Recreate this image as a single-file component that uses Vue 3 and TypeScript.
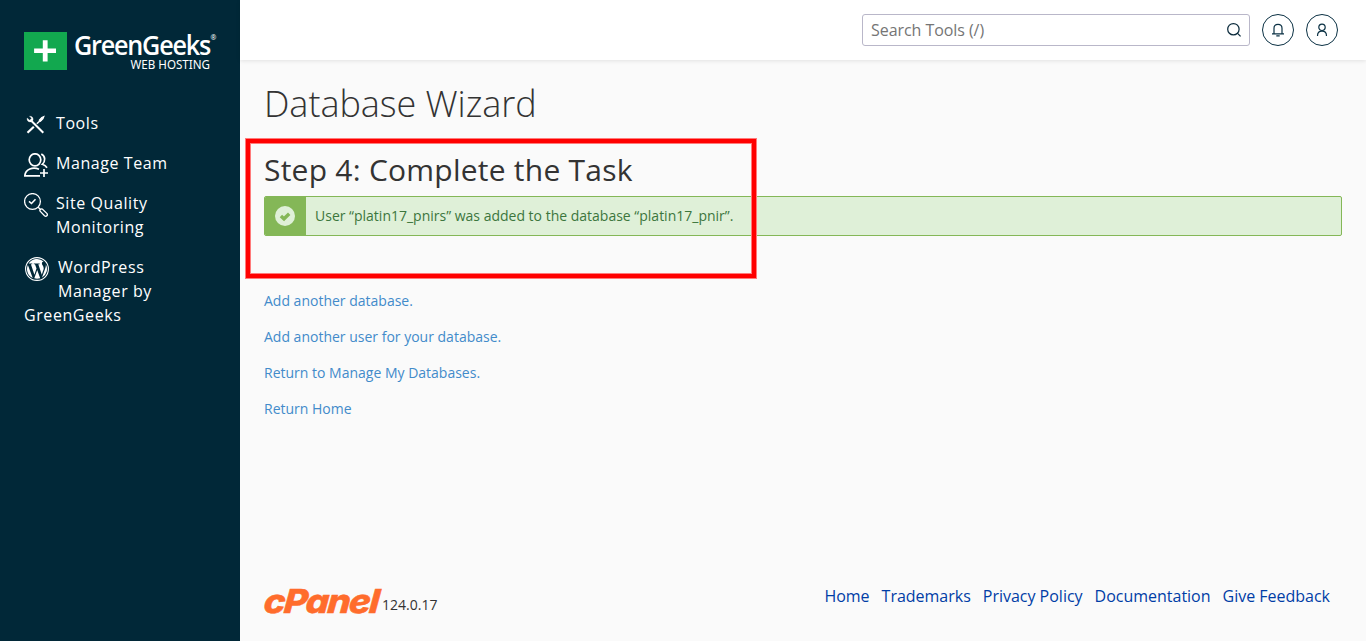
<script setup lang="ts">
interface NavLink {
  label: string
  href: string
}

const nextSteps: NavLink[] = [
  { label: 'Add another database.', href: '#add-database' },
  { label: 'Add another user for your database.', href: '#add-user' },
  { label: 'Return to Manage My Databases.', href: '#databases' },
  { label: 'Return Home', href: '#home' },
]

const footerLinks: NavLink[] = [
  { label: 'Home', href: '#home' },
  { label: 'Trademarks', href: '#trademarks' },
  { label: 'Privacy Policy', href: '#privacy' },
  { label: 'Documentation', href: '#docs' },
  { label: 'Give Feedback', href: '#feedback' },
]
</script>

<template>
  <div class="shell">
    <aside class="sidebar">
      <a class="brand" href="#home">
        <svg width="200" height="56" viewBox="0 -10 200 56">
          <rect x="0" y="1" width="43" height="38" fill="#12a84f" />
          <path d="M18.800 9.200h4.800v8.300h8.400v4.500h-8.400v8.400h-4.800v-8.400h-8.700v-4.500h8.700z" fill="#fff" />
          <text class="brand-name" x="50" y="24" textLength="136" lengthAdjust="spacingAndGlyphs">GreenGeeks</text>
          <text class="brand-mark" x="186.500" y="8.500">®</text>
          <text class="brand-sub" x="106.500" y="38" textLength="79.500" lengthAdjust="spacingAndGlyphs">WEB HOSTING</text>
        </svg>
      </a>

      <nav class="menu">
        <a class="item" href="#tools">
          <svg class="icon" viewBox="0 0 24 24" fill="none" stroke="#fff">
            <path d="M7.500 8 19.300 19.800" stroke-width="2" />
            <path d="M3.500 19.800 9.800 13.800" stroke-width="2.200" />
            <path d="M12.800 10.800 17.500 6.500" stroke-width="1.500" />
            <path d="M15.300 7.200 17.800 4.400 19.800 3.600 19 5.600 16.500 8.200z" fill="#fff" stroke-width="1.200" />
            <path d="M5.500 3.200 7.600 5.300 5.700 7.200 3.100 5C2.700 7.700 4.500 9.400 7.200 8.900L9.100 7.200C9.500 4.700 8.100 3 5.500 3.200z" fill="#fff" stroke-width=".3" />
          </svg>
          <span class="label">Tools</span>
        </a>
        <a class="item" href="#team">
          <svg class="icon" viewBox="0 0 24 24" fill="none" stroke="#fff" stroke-width="1.700">
            <ellipse cx="11" cy="6.800" rx="5.800" ry="6" />
            <path d="M17.300 1c4.300 2.300 4.300 7.300 1 10.300 2.200.6 3.700 1.700 4.700 3.400" />
            <path d="M15 16.200C9 13.500 1.200 16 .8 22.900H16" />
            <path d="M20 16v8M16 20h8" />
          </svg>
          <span class="label">Manage Team</span>
        </a>
        <a class="item" href="#quality">
          <svg class="icon" viewBox="0 0 24 24" fill="none" stroke="#fff" stroke-width="1.300">
            <circle cx="8.500" cy="8.500" r="7.900" />
            <path d="M5 8.300 7.500 10.500 11.500 6.300" stroke-width="1.600" />
            <path d="M14.200 14.200 17 17" />
            <path d="M16.100 18.200c-.8-1.300.7-2.900 2.200-2.100l4.500 4.300c1.500 1.700-.5 3.800-2.300 2.400z" />
          </svg>
          <span class="label">Site Quality Monitoring</span>
        </a>
        <a class="item item-plugin" href="#wordpress">
          <svg class="plugin-icon" viewBox="0 0 24 24">
            <circle cx="12" cy="12" r="11.400" fill="none" stroke="#fff" stroke-width="1.100" />
            <path fill="#fff" d="M2 12c0 4 2.300 7.400 5.700 9L2.900 8C2.300 9.200 2 10.600 2 12zM18.700 11.500c0-1.200-.4-2.100-.8-2.800-.5-.8-1-1.500-1-2.300 0-.9.700-1.800 1.700-1.800h.1A10 10 0 0 0 3.700 6.500h.6c1 0 2.700-.1 2.700-.1.500 0 .6.700.1.800l-1.200.1 3.500 10.500 2.100-6.400-1.500-4.100-1-.1c-.5 0-.5-.8.100-.8 0 0 1.600.1 2.600.1s2.700-.1 2.700-.1c.5 0 .6.700.1.800l-1.200.1 3.500 10.400 1-3.200c.6-1.500.9-2.500.9-3zM12.200 12.900l-2.900 8.400c2 .6 4.100.5 5.900-.1zM20.800 7.300c.2 1.600-.1 3-.7 4.500l-3.100 8.800A10 10 0 0 0 20.800 7.300z" />
          </svg>
          WordPress Manager by GreenGeeks
        </a>
      </nav>
    </aside>

    <div class="page">
      <header class="topbar">
        <div class="search">
          <input type="text" placeholder="Search Tools (/)" aria-label="Search Tools" />
          <svg width="16" height="16" viewBox="0 0 16 16" fill="none" stroke="#0b2b3c" stroke-width="1.250">
            <circle cx="7.400" cy="7.200" r="5.700" />
            <path d="M11.300 11.100 14.600 14.400" />
          </svg>
        </div>
        <button class="round" aria-label="Notifications">
          <svg width="14" height="14" viewBox="0 0 14 14" fill="none" stroke="#0b3144" stroke-width="1.200">
            <path d="M3 10.700V5.200C3 2.700 4.600 1.300 7 1.300s4 1.400 4 3.900v5.500M1 10.800h12M5.300 12.900h3.400" />
          </svg>
        </button>
        <button class="round" aria-label="Account">
          <svg width="14" height="14" viewBox="0 0 14 14" fill="none" stroke="#0b3144" stroke-width="1.200">
            <circle cx="7" cy="4.300" r="3.200" />
            <path d="M2.500 13c0-2.600 1.600-4.800 4.500-4.800s4.500 2.200 4.500 4.800" />
          </svg>
        </button>
      </header>

      <main class="content">
        <h1>Database Wizard</h1>
        <section class="step">
          <h2>Step 4: Complete the Task</h2>
          <div class="alert">
            <span class="alert-icon">
              <svg width="20" height="20" viewBox="0 0 20 20">
                <circle cx="10" cy="10" r="10" fill="#dff0d8" />
                <path d="M5.900 9.900 9 12.800 14.200 7.700" fill="none" stroke="#84b757" stroke-width="3.400" />
              </svg>
            </span>
            <span class="alert-text">User “platin17_pnirs” was added to the database “platin17_pnir”.</span>
          </div>
          <div class="highlight"></div>
        </section>
        <ul class="next">
          <li v-for="link in nextSteps" :key="link.label">
            <a :href="link.href">{{ link.label }}</a>
          </li>
        </ul>
      </main>

      <footer class="footer">
        <div class="product">
          <svg width="118" height="46" viewBox="0 -8 118 46">
            <text class="product-name" x="0" y="24" textLength="114" lengthAdjust="spacingAndGlyphs" transform="translate(1.200 0) skewX(-5)">cPanel</text>
          </svg>
          <span class="version">124.0.17</span>
        </div>
        <nav class="footer-links">
          <a v-for="link in footerLinks" :key="link.label" :href="link.href">{{ link.label }}</a>
        </nav>
      </footer>
    </div>
  </div>
</template>

<style>
body {
  margin: 0;
  background: #fafafa;
}
</style>

<style scoped>
.shell {
  display: flex;
  height: 641px;
  overflow: hidden;
  font-family: "Open Sans", "Noto Sans", sans-serif;
  color: #333;
}
a {
  text-decoration: none;
}
.sidebar {
  box-sizing: border-box;
  flex: 0 0 240px;
  padding-top: 21px;
  background: #012838;
}
.brand {
  display: block;
  padding-left: 24px;
}
.brand svg {
  display: block;
  overflow: visible;
}
.brand text {
  fill: #fff;
}
.brand-name {
  font: 600 27px "Open Sans", sans-serif;
  letter-spacing: -1.300px;
}
.brand-mark {
  font: 7px "Noto Sans", sans-serif;
}
.brand-sub {
  font: 12.500px "Noto Sans", sans-serif;
}
.menu {
  margin-top: 26px;
}
.item {
  display: flex;
  gap: 8px;
  padding: 8px 24px;
  color: #fff;
  font-size: 16px;
  line-height: 24px;
  letter-spacing: 0.58px;
}
.icon {
  flex: none;
  width: 24px;
  height: 24px;
  margin: 2px 0 -2px;
}
.label {
  width: 130px;
}
.item-plugin {
  display: block;
  width: 140px;
}
.plugin-icon {
  float: left;
  width: 24px;
  height: 24px;
  margin: 2px 9px 4px 1px;
}
.page {
  flex: 1;
  display: flex;
  flex-direction: column;
  background: #fafafa;
}
.topbar {
  box-sizing: border-box;
  flex: 0 0 60px;
  display: flex;
  justify-content: flex-end;
  align-items: center;
  gap: 12px;
  padding-right: 28px;
  background: #fff;
  box-shadow: 0 1px 4px rgba(0, 0, 0, 0.1);
}
.search {
  box-sizing: border-box;
  display: flex;
  align-items: center;
  width: 388px;
  height: 32px;
  padding: 0 7px 0 8px;
  border: 1px solid #b9b7c9;
  border-radius: 3px;
  background: #fff;
}
.search input {
  flex: 1;
  min-width: 0;
  padding: 0;
  border: 0;
  outline: 0;
  background: none;
  font: 16px "Open Sans", sans-serif;
  letter-spacing: -0.06px;
}
.search input::placeholder {
  color: #757575;
}
.round {
  box-sizing: border-box;
  display: flex;
  align-items: center;
  justify-content: center;
  width: 32px;
  height: 32px;
  padding: 0;
  border: 1px solid #0b3144;
  border-radius: 50%;
  background: #fff;
}
.content {
  flex: 1;
  padding: 24px 24px 0;
}
h1 {
  margin: 0;
  font-size: 36px;
  font-weight: 300;
  line-height: 40px;
  letter-spacing: -0.05px;
}
.step {
  position: relative;
  margin-top: 29px;
}
h2 {
  margin: 0;
  font-size: 30px;
  font-weight: 400;
  line-height: 33px;
  letter-spacing: 0.24px;
}
.alert {
  box-sizing: border-box;
  display: flex;
  height: 40px;
  margin-top: 10px;
  border: 1px solid #84b757;
  border-radius: 2px;
  background: #dff0d8;
  overflow: hidden;
}
.alert-icon {
  box-sizing: border-box;
  flex: 0 0 41px;
  display: flex;
  align-items: center;
  justify-content: center;
  padding-right: 1px;
  background: #84b757;
}
.alert-text {
  padding-left: 9px;
  color: #3c763d;
  font-size: 14px;
  line-height: 38px;
}
.highlight {
  position: absolute;
  left: -18px;
  top: -14px;
  width: 502px;
  height: 131px;
  border: 4px solid #f00;
  outline: 1px solid #ff7b7b;
  box-shadow: inset 0 0 0 1px #ff7b7b;
}
.next {
  margin: 55px 0 0;
  padding: 0;
  list-style: none;
}
.next li {
  height: 36px;
  font-size: 14px;
  line-height: 20px;
}
.next a {
  color: #428bca;
}
.footer {
  flex: 0 0 60px;
  display: flex;
  justify-content: space-between;
  padding: 0 36px 0 24px;
}
.product {
  display: flex;
}
.product svg {
  overflow: visible;
}
.product-name {
  font: italic 800 33px Inter, sans-serif;
  letter-spacing: -1.500px;
  fill: #ff6c2c;
  stroke: #ff6c2c;
  stroke-width: 0.500px;
}
.version {
  padding-top: 14px;
  font-size: 14px;
  line-height: 20px;
  color: #333;
}
.footer-links {
  display: flex;
  gap: 12px;
  padding-top: 3px;
  font-size: 16px;
  line-height: 24px;
  letter-spacing: -0.01px;
}
.footer-links a {
  color: #003da6;
}
</style>
